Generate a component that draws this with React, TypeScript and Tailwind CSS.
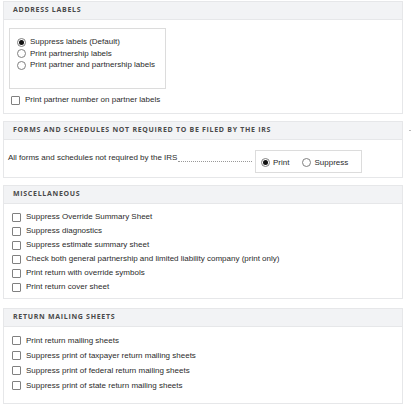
import type { ReactNode } from 'react'

const miscOptions = [
  'Suppress Override Summary Sheet',
  'Suppress diagnostics',
  'Suppress estimate summary sheet',
  'Check both general partnership and limited liability company (print only)',
  'Print return with override symbols',
  'Print return cover sheet',
]

const mailingOptions = [
  'Print return mailing sheets',
  'Suppress print of taxpayer return mailing sheets',
  'Suppress print of federal return mailing sheets',
  'Suppress print of state return mailing sheets',
]

function Radio({ checked = false }: { checked?: boolean }) {
  return (
    <span className="flex h-[9px] w-[9px] shrink-0 items-center justify-center rounded-full border border-[#808080] bg-white">
      {checked && <span className="h-[5px] w-[5px] rounded-full bg-[#111]" />}
    </span>
  )
}

function Checkbox() {
  return <span className="h-[9px] w-[9px] shrink-0 rounded-[1px] border border-[#808080] bg-white" />
}

function CheckRow({ label, tall = false }: { label: string; tall?: boolean }) {
  return (
    <div className={`flex items-center gap-[5px] ${tall ? 'h-[15px]' : 'h-[14px]'}`}>
      <Checkbox />
      <span>{label}</span>
    </div>
  )
}

function Panel({ title, children, className = '' }: { title: string; children: ReactNode; className?: string }) {
  return (
    <section className={`w-[400px] border border-[#e6e7e9] bg-white ${className}`}>
      <div className="flex h-[18px] items-center border-b border-[#e6e7e9] bg-[#f2f3f5] pl-[9px] font-['Open_Sans',sans-serif] text-[7px] font-bold uppercase tracking-[0.1em] text-[#4a4a4a]">
        {title}
      </div>
      {children}
    </section>
  )
}

export default function App() {
  return (
    <div className="relative min-h-[412px] bg-white pl-[3px] pt-[1px] font-['Liberation_Sans',Arial,sans-serif] text-[8px] text-[#2b2b2b]">
      <Panel title="Address Labels">
        <div className="px-[5px] pb-[6px] pt-[8px]">
          <div className="h-[61px] w-[157px] border border-[#dcdcdc] px-[7px] pt-[7px]">
            <div className="flex h-[12px] items-center gap-[4px]">
              <Radio checked />
              <span>Suppress labels (Default)</span>
            </div>
            <div className="flex h-[11px] items-center gap-[4px]">
              <Radio />
              <span>Print partnership labels</span>
            </div>
            <div className="flex h-[12px] items-center gap-[4px]">
              <Radio />
              <span>Print partner and partnership labels</span>
            </div>
          </div>
          <div className="mt-[4px] pl-[2px]">
            <CheckRow label="Print partner number on partner labels" />
          </div>
        </div>
      </Panel>

      <Panel title="Forms and schedules not required to be filed by the IRS" className="mt-[7px]">
        <div className="flex items-start pb-[4px] pl-[4px] pt-[10px]">
          <div className="flex w-[244px] items-end pt-[2px]">
            <span className="whitespace-nowrap">All forms and schedules not required by the IRS</span>
            <span className="mb-[2px] ml-[1px] flex-1 border-b border-dotted border-[#999]" />
          </div>
          <div className="ml-[3px] flex h-[23px] w-[107px] items-center border border-[#dcdcdc] pl-[5px] pt-[2px]">
            <div className="flex items-center gap-[3px]">
              <Radio checked />
              <span>Print</span>
            </div>
            <div className="ml-[13px] flex items-center gap-[3px]">
              <Radio />
              <span>Suppress</span>
            </div>
          </div>
        </div>
      </Panel>

      <Panel title="Miscellaneous" className="mt-[7px]">
        <div className="pb-[4px] pl-[8px] pt-[6px]">
          {miscOptions.map((option) => (
            <CheckRow key={option} label={option} />
          ))}
        </div>
      </Panel>

      <Panel title="Return Mailing Sheets" className="mt-[9px]">
        <div className="pb-[10px] pl-[8px] pt-[6px]">
          {mailingOptions.map((option) => (
            <CheckRow key={option} label={option} tall />
          ))}
        </div>
      </Panel>

      <span className="absolute left-[409px] top-[130px] h-px w-[2px] bg-[#bbb]" />
    </div>
  )
}
